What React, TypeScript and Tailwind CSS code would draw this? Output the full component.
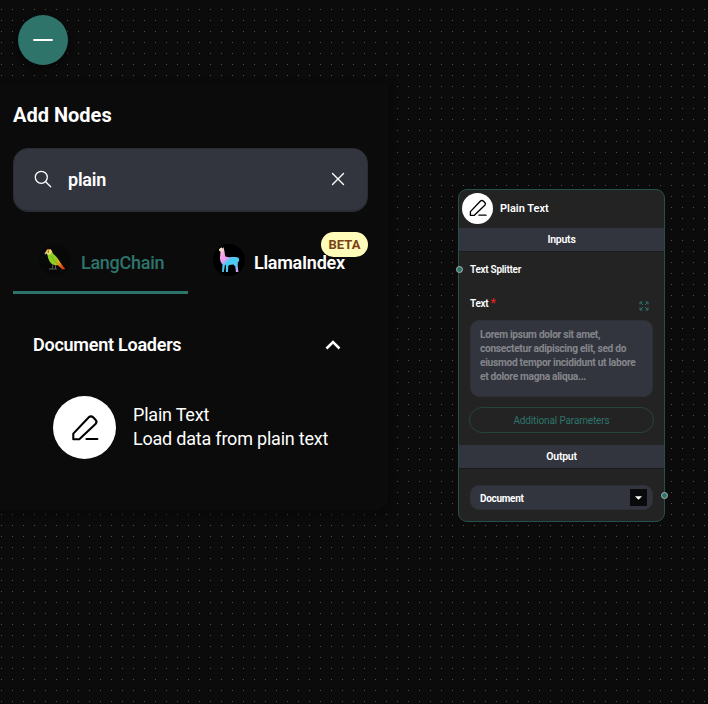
import React from 'react';

function PencilIcon({ className, strokeWidth = 2.1 }: { className?: string; strokeWidth?: number }) {
  return (
    <svg viewBox="0 0 40 40" fill="none" stroke="currentColor" strokeWidth={strokeWidth} strokeLinecap="round" strokeLinejoin="round" className={className}>
      <path d="M8.300 31.300V25.600L23.800 9.300a3 3 0 0 1 4.300 0l2.400 2.400a3 3 0 0 1 0 4.200L14.300 31.300z" />
      <path d="M21.400 31h11" />
    </svg>
  );
}

function Parrot() {
  return (
    <svg viewBox="0 0 32 32" className="size-8 shrink-0 rounded-full bg-[#070908]">
      <defs>
        <linearGradient id="wing" x1="7" y1="14" x2="25" y2="20" gradientUnits="userSpaceOnUse">
          <stop offset="0" stopColor="#8bd322" />
          <stop offset="0.5" stopColor="#90cc22" />
          <stop offset="0.7" stopColor="#e2a51e" />
          <stop offset="1" stopColor="#e2380f" />
        </linearGradient>
      </defs>
      <path d="M10 25h8M14 20l-.5 5M16.500 21v4" stroke="#5a5f56" strokeWidth="1" fill="none" />
      <path d="M7.500 8C8 5 12 4.500 13 7.500c.7 2.500 3 3.500 5 6 2.500 3 4.500 7 8.200 11.500l-2.700.4-4.500-4.200c-3 .6-6-.6-8-3.100C9 15.500 9 12 7.500 8z" fill="url(#wing)" />
      <path d="M12.500 12c1 3 3.500 6 7 8.500" stroke="#6db51a" strokeWidth="1" fill="none" />
      <path d="M7 9C6.500 5.500 9.500 4 11.800 5.500c1.700 1.500 1.200 4-.8 5-1.500.4-3 0-4-1.500z" fill="#eedc63" />
      <path d="M7.300 6.300c1-1.500 2.700-1.600 3.700-.7L10 6.800z" fill="#e6532c" />
      <path d="M7.300 7.800c-1.700 0-2 1.500-1.300 3L8 9.200z" fill="#b9a8a0" />
      <circle cx="9.300" cy="7.900" r=".6" fill="#222" />
    </svg>
  );
}

function Llama() {
  return (
    <svg viewBox="0 0 32 32" className="size-8 shrink-0 rounded-full bg-black">
      <defs>
        <linearGradient id="llama" x1="6" y1="4" x2="26" y2="26" gradientUnits="userSpaceOnUse">
          <stop offset="0.05" stopColor="#f6e8c4" />
          <stop offset="0.25" stopColor="#f6a5e5" />
          <stop offset="0.42" stopColor="#e99af0" />
          <stop offset="0.55" stopColor="#43cdf4" />
          <stop offset="0.8" stopColor="#55c8f3" />
          <stop offset="1" stopColor="#d59ae8" />
        </linearGradient>
      </defs>
      <path d="M8.500 3.200 9.300 4.500 10.500 3.200 11 5.500C12 8 11.500 10.500 12.500 12.500c3 1.300 7 .3 10 .6 2 .2 3.800.5 3.700 3-.1 1.500-.8 2-1.300 2.200l-.2 3 .7 6.700h-2.500l-.6-5.500-1.800-2-4.500.5-.7 1-.4 6h-2l.1-6.500-1-1-1.200 7.500H9.100l.4-7.500C7.300 18.500 6.600 15 7.200 12l.3-4.500-1.600-.8.3-1.700z" fill="url(#llama)" />
    </svg>
  );
}

function AddNodesPanel() {
  return (
    <aside className="relative mt-[19px] h-[426px] w-[388px] rounded-br-xl bg-[#0b0b0b] px-[13px] pt-[19px] text-white shadow-[2px_2px_8px_#070707]">
      <h2 className="text-[20px] leading-6 font-bold">Add Nodes</h2>
      <div className="mt-[21px] flex h-16 w-[355px] items-center rounded-[15px] border border-[#292d33] bg-[#32353e] pl-5 text-white shadow-[inset_0_-1px_#292c34]">
        <svg viewBox="0 0 18 18" fill="none" stroke="currentColor" strokeWidth="1.3" strokeLinecap="round" className="mb-0.5 size-[18px]">
          <circle cx="7.300" cy="7.300" r="6" />
          <path d="m11.700 11.700 5 5" />
        </svg>
        <span className="mb-0.5 ml-4 grow text-[18px] font-semibold tracking-[-0.25px]">plain</span>
        <svg viewBox="0 0 14 14" fill="none" stroke="currentColor" strokeWidth="1.4" strokeLinecap="round" className="mr-[22px] mb-0.5 size-[14px]">
          <path d="m1.500 1.500 11 11m0-11-11 11" />
        </svg>
      </div>
      <div className="mt-[19px] flex w-[355px] text-[18px] leading-6 tracking-[-0.28px]">
        <div className="flex h-[63px] w-[175px] items-start border-b-[3px] border-[#2e746b] pt-[13px] pl-[26px] text-[#2e746b]">
          <Parrot />
          <span className="mt-[7px] ml-[10px] font-medium">LangChain</span>
        </div>
        <div className="relative flex h-[63px] w-[180px] items-start pt-[13px] pl-[25px]">
          <Llama />
          <span className="mt-[7px] ml-[9px] font-semibold">LlamaIndex</span>
          <span className="absolute top-px right-0 flex h-[25px] w-[47px] items-center justify-center rounded-full bg-[#fffbb8] text-[13px] font-bold tracking-normal text-[#784315]">BETA</span>
        </div>
      </div>
      <div className="mt-[39px] flex items-center justify-between pr-[34px] pl-5">
        <h3 className="text-[18px] leading-6 font-semibold tracking-[-0.25px]">Document Loaders</h3>
        <svg viewBox="0 0 16 10" fill="none" stroke="currentColor" strokeWidth="2.500" className="h-[10px] w-4">
          <path d="m1.500 8.500 6.500-6.500 6.500 6.500" />
        </svg>
      </div>
      <div className="mt-[39px] ml-10 flex items-center gap-[17px]">
        <div className="flex size-[63px] items-center justify-center rounded-full bg-white text-black">
          <PencilIcon className="size-10" />
        </div>
        <div className="-mt-0.5 text-[18px] leading-6 tracking-[-0.21px]">
          <p>Plain Text</p>
          <p>Load data from plain text</p>
        </div>
      </div>
    </aside>
  );
}

function SectionBar({ children }: { children: React.ReactNode }) {
  return <div className="flex h-6 items-center justify-center border-b border-[#181a1e] bg-[#32353e] text-[10.500px] font-semibold tracking-[-0.25px]">{children}</div>;
}

function PlainTextNode() {
  return (
    <section className="absolute top-[189px] left-[458px] h-[333px] w-[207px] rounded-[9px] border border-[#27504b] bg-[#232323] text-[10px] text-white">
      <header className="flex h-[38px] items-center pl-[3px]">
        <div className="-mt-0.5 flex size-[31px] items-center justify-center rounded-full bg-white text-black">
          <PencilIcon className="size-[26px]" strokeWidth={2.1} />
        </div>
        <span className="ml-[7px] text-[11px] font-semibold">Plain Text</span>
      </header>
      <SectionBar>Inputs</SectionBar>
      <div className="px-[11px] pt-[11px]">
        <p className="leading-[14px] font-semibold tracking-[-0.28px]">Text Splitter</p>
        <div className="mt-5 flex h-4 items-start justify-between pr-1">
          <p className="leading-[14px] font-semibold tracking-[-0.28px]">Text <span className="text-[12px] leading-none text-[#e32222]">*</span></p>
          <svg viewBox="0 0 10 10" fill="none" stroke="#2e746b" strokeWidth="1" className="mt-1 size-[10px] shrink-0">
            <path d="M1 3.500V1h2.500M6.500 1H9v2.500M9 6.500V9H6.500M3.500 9H1V6.500M1 1l3 3M9 1 6 4M9 9 6 6M1 9l3-3" />
          </svg>
        </div>
        <div className="mt-[7px] h-[77px] w-[183px] rounded-[9px] border border-[#2d3036] bg-[#32353e] px-[9px] pt-[7px] text-[10.200px] leading-[14px] font-bold tracking-[-0.3px] whitespace-nowrap text-[#85868b]">
          <p>Lorem ipsum dolor sit amet,</p>
          <p>consectetur adipiscing elit, sed do</p>
          <p>eiusmod tempor incididunt ut labore</p>
          <p>et dolore magna aliqua...</p>
        </div>
        <div className="mt-[10px] -ml-px flex h-[26px] w-[185px] items-center justify-center rounded-full border border-[#25443f] text-[10px] tracking-[-0.14px] text-[#2e746b]">Additional Parameters</div>
      </div>
      <div className="mt-3">
        <SectionBar>Output</SectionBar>
      </div>
      <div className="mt-4 ml-[11px] flex h-[25px] w-[183px] items-center justify-between rounded-[9px] border border-[#2d3036] bg-[#32353e] pr-[5px] pl-[9px] text-[10px] font-bold tracking-[-0.3px]">
        <span className="pt-px">Document</span>
        <div className="flex size-[17px] items-center justify-center bg-[#090a0b]">
          <svg viewBox="0 0 8 4" className="h-1 w-[7px] fill-white"><path d="M0 0h8L4 4z" /></svg>
        </div>
      </div>
      <i className="absolute top-[76px] -left-[3.500px] size-[7px] rounded-full border border-[#a8b5b0] bg-[#2e746b]" />
      <i className="absolute top-[302px] -right-[3.500px] size-[7px] rounded-full border border-[#a8b5b0] bg-[#2e746b]" />
    </section>
  );
}

const DOT_PITCH = 10.98;
const dots = Array.from({ length: 64 }, (_, row) =>
  Array.from({ length: 65 }, (_, col) => `M${Math.floor(1.9 + col * DOT_PITCH)} ${Math.floor(9.6 + row * DOT_PITCH)}h1v1h-1z`).join(''),
).join('');

function DotGrid() {
  return (
    <svg viewBox="0 0 708 704" className="absolute inset-0 h-[704px] w-[708px]">
      <path d={dots} fill="#505050" />
    </svg>
  );
}

export default function App() {
  return (
    <main className="relative h-[704px] w-[708px] overflow-hidden bg-[#0b0b0b] pt-[15px] font-[Roboto,sans-serif]">
      <DotGrid />
      <button className="relative ml-[18px] flex size-[50px] items-center justify-center rounded-full bg-[#2e746b] shadow-[0_3px_6px_#050505]" aria-label="Close nodes">
        <span className="h-[2.500px] w-5 rounded-sm bg-white" />
      </button>
      <AddNodesPanel />
      <PlainTextNode />
    </main>
  );
}
